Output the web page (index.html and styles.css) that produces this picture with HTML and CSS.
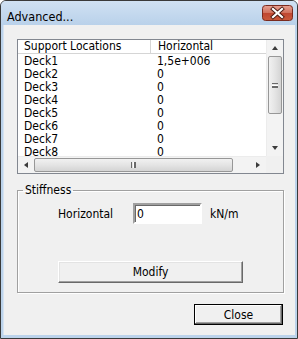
FILE: index.html
```html
<!DOCTYPE html>
<html lang="en">

<head>
    <meta charset="UTF-8">
    <title>Advanced...</title>
    <link rel="stylesheet" href="styles.css">
</head>

<body>
    <div class="window">
        <div class="titlebar">
            <span class="title">Advanced...</span>
            <div class="close-x">
                <svg width="31" height="16" viewBox="0 0 31 16">
                    <defs>
                        <linearGradient id="red" x1="0" y1="0" x2="0" y2="1">
                            <stop offset="0" stop-color="#e8a293"/>
                            <stop offset="0.5" stop-color="#d0705c"/>
                            <stop offset="0.51" stop-color="#bf4630"/>
                            <stop offset="1" stop-color="#c95a3c"/>
                        </linearGradient>
                    </defs>
                    <rect x="0.5" y="0.5" width="30" height="15" rx="3" fill="url(#red)" stroke="#7a2a1e"/>
                    <path d="M11 4 L20 12 M20 4 L11 12" stroke="#4a1a12" stroke-width="4" stroke-linecap="square"/>
                    <path d="M11 4 L20 12 M20 4 L11 12" stroke="#fff" stroke-width="2.2" stroke-linecap="square"/>
                </svg>
            </div>
        </div>

        <div class="client">
            <div class="listview">
                <div class="lv-body">
                    <div class="lv-table">
                        <div class="lv-header">
                            <div class="col1">Support Locations</div>
                            <div class="col2">Horizontal</div>
                        </div>
                        <div class="lv-row"><div class="col1">Deck1</div><div class="col2">1,5e+006</div></div>
                        <div class="lv-row"><div class="col1">Deck2</div><div class="col2">0</div></div>
                        <div class="lv-row"><div class="col1">Deck3</div><div class="col2">0</div></div>
                        <div class="lv-row"><div class="col1">Deck4</div><div class="col2">0</div></div>
                        <div class="lv-row"><div class="col1">Deck5</div><div class="col2">0</div></div>
                        <div class="lv-row"><div class="col1">Deck6</div><div class="col2">0</div></div>
                        <div class="lv-row"><div class="col1">Deck7</div><div class="col2">0</div></div>
                        <div class="lv-row"><div class="col1">Deck8</div><div class="col2">0</div></div>
                    </div>
                    <div class="vscroll">
                        <div class="sb-btn"><span class="arrow up"></span></div>
                        <div class="sb-track">
                            <div class="thumb-v"><span class="grip-v"></span></div>
                        </div>
                        <div class="sb-btn"><span class="arrow down"></span></div>
                    </div>
                </div>
                <div class="lv-bottom">
                    <div class="hscroll">
                        <div class="sb-btn"><span class="arrow left"></span></div>
                        <div class="sb-track">
                            <div class="thumb-h"><span class="grip-h"></span></div>
                        </div>
                        <div class="sb-btn"><span class="arrow right"></span></div>
                    </div>
                    <div class="corner"></div>
                </div>
            </div>

            <fieldset class="group">
                <legend>Stiffness</legend>
                <div class="field-row">
                    <label for="horiz">Horizontal</label>
                    <input type="text" id="horiz" value="0">
                    <span class="unit">kN/m</span>
                </div>
                <button class="btn modify">Modify</button>
            </fieldset>

            <div class="footer">
                <button class="btn default">Close</button>
            </div>
        </div>
    </div>
</body>

</html>
```

FILE: styles.css
```css
body {
    margin: 0;
    font-family: "DejaVu Sans Condensed", "DejaVu Sans", sans-serif;
    font-stretch: condensed;
    font-size: 12px;
    color: #000;
    background: #fff;
}

.window {
    width: 298px;
    height: 339px;
    box-sizing: border-box;
    border: 1px solid #3a3a3a;
    border-radius: 6px 6px 0 0;
    background: #bcd3eb;
    padding: 0 2px 3px 2px;
    display: flex;
    flex-direction: column;
}

.titlebar {
    height: 24px;
    display: flex;
    align-items: flex-start;
    justify-content: space-between;
    background: linear-gradient(#d0e1f3, #b9d1ea);
    margin: 0 -2px;
    padding: 0 4px 0 6px;
    border-radius: 5px 5px 0 0;
}

.title {
    margin-top: 8px;
    font-size: 12.5px;
}

.close-x {
    margin-top: 4px;
    height: 16px;
}

.client {
    flex: 1;
    background: #f0f0f0;
    padding: 14px 12px 0 13px;
    border-left: 1px solid #d6e3f1;
}

/* list view */
.listview {
    width: 267px;
    height: 135px;
    box-sizing: border-box;
    border: 1px solid #828790;
    background: #fff;
    display: flex;
    flex-direction: column;
}

.lv-body {
    flex: 1;
    display: flex;
    overflow: hidden;
}

.lv-table {
    flex: 1;
    overflow: hidden;
}

.lv-header,
.lv-row {
    display: flex;
    height: 13px;
    line-height: 13px;
    white-space: nowrap;
}

.lv-header {
    height: 13px;
    border-bottom: 1px solid #d5d5d5;
    margin-bottom: 1px;
}

.lv-header .col1 {
    border-right: 1px solid #d5d5d5;
}

.col1 {
    width: 126px;
    padding-left: 6px;
}

.col2 {
    padding-left: 7px;
}

/* scrollbars */
.vscroll {
    width: 17px;
    display: flex;
    flex-direction: column;
    background: #f3f3f3;
    border-left: 1px solid #ececec;
    box-sizing: border-box;
}

.hscroll {
    flex: 1;
    height: 17px;
    display: flex;
    background: #f3f3f3;
    border-top: 1px solid #ececec;
    box-sizing: border-box;
}

.sb-btn {
    width: 16px;
    height: 16px;
    flex: none;
    display: flex;
    align-items: center;
    justify-content: center;
}

.sb-track {
    flex: 1;
    display: flex;
}

.vscroll .sb-track {
    flex-direction: column;
}

.thumb-v {
    height: 56px;
    margin: 0 1px;
    border: 1px solid #979797;
    border-radius: 2px;
    background: linear-gradient(90deg, #f1f1f1, #e4e4e4 50%, #d4d4d4);
    display: flex;
    align-items: center;
    justify-content: center;
}

.thumb-h {
    width: 197px;
    margin: 1px 0;
    border: 1px solid #979797;
    border-radius: 2px;
    background: linear-gradient(#f1f1f1, #e4e4e4 50%, #d4d4d4);
    display: flex;
    align-items: center;
    justify-content: center;
}

.grip-v {
    width: 6px;
    height: 5px;
    border-top: 1px solid #6a6a6a;
    border-bottom: 1px solid #6a6a6a;
    box-sizing: border-box;
    background: linear-gradient(#fff 1px, #6a6a6a 1px, #6a6a6a 2px, #fff 2px);
    background-size: 100% 2px;
    background-repeat: no-repeat;
    background-position: 0 1px;
}

.grip-h {
    width: 5px;
    height: 6px;
    border-left: 1px solid #6a6a6a;
    border-right: 1px solid #6a6a6a;
    box-sizing: border-box;
    background: linear-gradient(90deg, #fff 1px, #6a6a6a 1px, #6a6a6a 2px, #fff 2px);
    background-size: 2px 100%;
    background-repeat: no-repeat;
    background-position: 1px 0;
}

.arrow {
    width: 0;
    height: 0;
    border: 4px solid transparent;
}

.arrow.up {
    border-bottom-color: #3c3c3c;
    border-top-width: 0;
    border-left-width: 3.5px;
    border-right-width: 3.5px;
}

.arrow.down {
    border-top-color: #3c3c3c;
    border-bottom-width: 0;
    border-left-width: 3.5px;
    border-right-width: 3.5px;
}

.arrow.left {
    border-right-color: #3c3c3c;
    border-left-width: 0;
    border-top-width: 3.5px;
    border-bottom-width: 3.5px;
}

.arrow.right {
    border-left-color: #3c3c3c;
    border-right-width: 0;
    border-top-width: 3.5px;
    border-bottom-width: 3.5px;
}

.lv-bottom {
    display: flex;
}

.corner {
    width: 17px;
    height: 17px;
    background: #f0f0f0;
}

/* group box */
.group {
    margin: 9px 0 0 0;
    width: 267px;
    height: 110px;
    box-sizing: border-box;
    border: 1px solid #a0a0a0;
    box-shadow: 1px 1px 0 #fff, inset 1px 1px 0 #fff;
    padding: 0;
    display: flex;
    flex-direction: column;
    align-items: flex-start;
}

.group legend {
    margin-left: 5px;
    padding: 0 2px;
}

.field-row {
    display: flex;
    align-items: center;
    margin: 6px 0 0 40px;
}

.field-row label {
    width: 75px;
}

.field-row input {
    width: 69px;
    height: 21px;
    box-sizing: border-box;
    border: 2px solid;
    border-color: #a0a0a0 #fff #fff #a0a0a0;
    box-shadow: inset 1px 1px 0 #696969;
    padding: 0 2px;
    font: inherit;
    outline: none;
}

.unit {
    margin-left: 8px;
}

.btn {
    font: inherit;
    font-stretch: condensed;
    background: #f0f0f0;
    border: 1px solid;
    border-color: #fff #696969 #696969 #fff;
    box-shadow: inset -1px -1px 0 #a0a0a0, inset 1px 1px 0 #e3e3e3;
    padding: 0;
    color: #000;
}

.modify {
    width: 185px;
    height: 22px;
    margin: 37px 0 0 40px;
}

.footer {
    display: flex;
    justify-content: flex-end;
    padding: 11px 0 0 0;
}

.default {
    width: 89px;
    height: 21px;
    border: 1px solid #000;
    box-shadow: inset -1px -1px 0 #696969, inset 1px 1px 0 #fff, inset -2px -2px 0 #a0a0a0;
}
```
